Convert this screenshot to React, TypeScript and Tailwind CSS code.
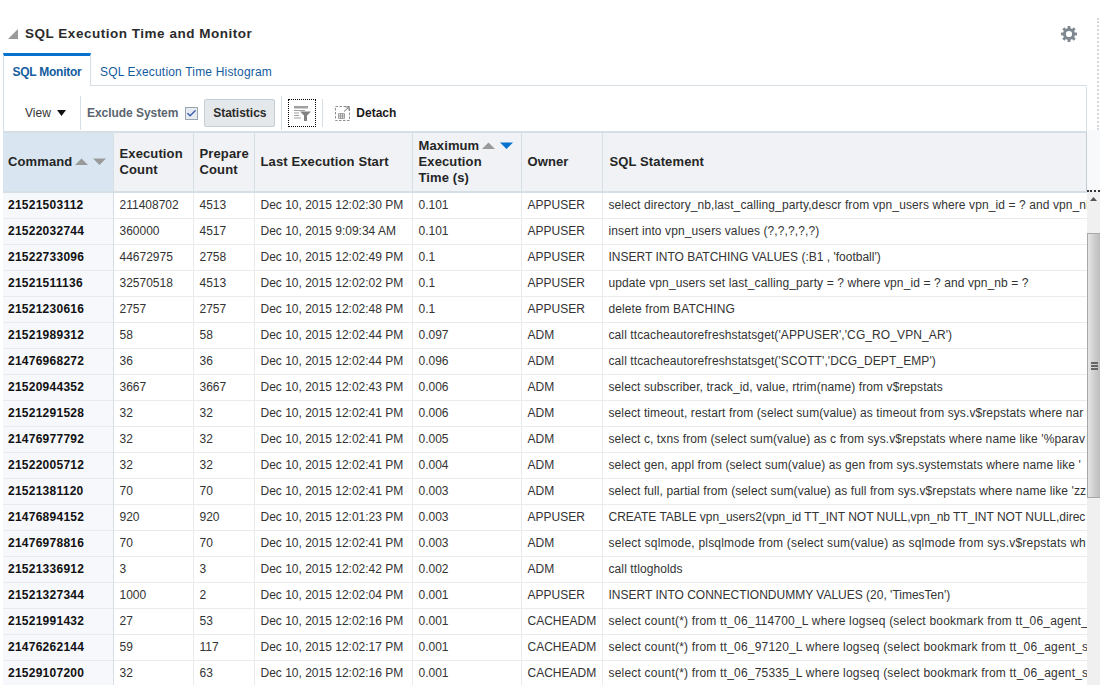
import { Check } from "lucide-react";

const rows = [
  ["21521503112", "211408702", "4513", "Dec 10, 2015 12:02:30 PM", "0.101", "APPUSER", "select directory_nb,last_calling_party,descr from vpn_users where vpn_id = ? and vpn_nb = ?"],
  ["21522032744", "360000", "4517", "Dec 10, 2015 9:09:34 AM", "0.101", "APPUSER", "insert into vpn_users values (?,?,?,?,?)"],
  ["21522733096", "44672975", "2758", "Dec 10, 2015 12:02:49 PM", "0.1", "APPUSER", "INSERT INTO BATCHING VALUES (:B1 , 'football')"],
  ["21521511136", "32570518", "4513", "Dec 10, 2015 12:02:02 PM", "0.1", "APPUSER", "update vpn_users set last_calling_party = ? where vpn_id = ? and vpn_nb = ?"],
  ["21521230616", "2757", "2757", "Dec 10, 2015 12:02:48 PM", "0.1", "APPUSER", "delete from BATCHING"],
  ["21521989312", "58", "58", "Dec 10, 2015 12:02:44 PM", "0.097", "ADM", "call ttcacheautorefreshstatsget('APPUSER','CG_RO_VPN_AR')"],
  ["21476968272", "36", "36", "Dec 10, 2015 12:02:44 PM", "0.096", "ADM", "call ttcacheautorefreshstatsget('SCOTT','DCG_DEPT_EMP')"],
  ["21520944352", "3667", "3667", "Dec 10, 2015 12:02:43 PM", "0.006", "ADM", "select subscriber, track_id, value, rtrim(name) from v$repstats"],
  ["21521291528", "32", "32", "Dec 10, 2015 12:02:41 PM", "0.006", "ADM", "select timeout, restart from (select sum(value) as timeout from sys.v$repstats where nar"],
  ["21476977792", "32", "32", "Dec 10, 2015 12:02:41 PM", "0.005", "ADM", "select c, txns from (select sum(value) as c from sys.v$repstats where name like '%parav"],
  ["21522005712", "32", "32", "Dec 10, 2015 12:02:41 PM", "0.004", "ADM", "select gen, appl from (select sum(value) as gen from sys.systemstats where name like '"],
  ["21521381120", "70", "70", "Dec 10, 2015 12:02:41 PM", "0.003", "ADM", "select full, partial from (select sum(value) as full from sys.v$repstats where name like 'zz"],
  ["21476894152", "920", "920", "Dec 10, 2015 12:01:23 PM", "0.003", "APPUSER", "CREATE TABLE vpn_users2(vpn_id TT_INT NOT NULL,vpn_nb TT_INT NOT NULL,direc"],
  ["21476978816", "70", "70", "Dec 10, 2015 12:02:41 PM", "0.003", "ADM", "select sqlmode, plsqlmode from (select sum(value) as sqlmode from sys.v$repstats wh"],
  ["21521336912", "3", "3", "Dec 10, 2015 12:02:42 PM", "0.002", "ADM", "call ttlogholds"],
  ["21521327344", "1000", "2", "Dec 10, 2015 12:02:04 PM", "0.001", "APPUSER", "INSERT INTO CONNECTIONDUMMY VALUES (20, 'TimesTen')"],
  ["21521991432", "27", "53", "Dec 10, 2015 12:02:16 PM", "0.001", "CACHEADM", "select count(*) from tt_06_114700_L where logseq (select bookmark from tt_06_agent_"],
  ["21476262144", "59", "117", "Dec 10, 2015 12:02:17 PM", "0.001", "CACHEADM", "select count(*) from tt_06_97120_L where logseq (select bookmark from tt_06_agent_s"],
  ["21529107200", "32", "63", "Dec 10, 2015 12:02:16 PM", "0.001", "CACHEADM", "select count(*) from tt_06_75335_L where logseq (select bookmark from tt_06_agent_s"],
];

// the reference's hinted text runs a little wider on lowercase-heavy rows
function sqlCell(sql: string) {
  if (sql.startsWith("INSERT") || sql.startsWith("CREATE")) {
    return "overflow-hidden pl-[6px] whitespace-nowrap";
  }
  if (sql.startsWith("select count") || sql.startsWith("select sqlmode")) {
    return "overflow-hidden pl-[6px] tracking-[0.2px] whitespace-nowrap";
  }
  return "overflow-hidden pl-[6px] tracking-[0.1px] whitespace-nowrap";
}

function SortArrows({ active }: { active?: boolean }) {
  return (
    <svg width="34" height="10" viewBox="0 0 34 10" className="shrink-0">
      <path d="M1 8 L7.5 1.5 L14 8 Z" fill="#9a9a9a" />
      <path d="M19 1.5 H32 L25.5 8 Z" fill={active ? "#0572ce" : "#9a9a9a"} />
    </svg>
  );
}

function Gear() {
  return (
    <svg width="16" height="16" viewBox="0 0 16 16">
      <circle cx="8" cy="8" r="4.6" fill="none" stroke="#7f8890" strokeWidth="3" />
      <g stroke="#7f8890" strokeWidth="2.8">
        <path d="M8 0 V3" />
        <path d="M8 13 V16" />
        <path d="M0 8 H3" />
        <path d="M13 8 H16" />
        <path d="M2.3 2.3 L4.4 4.4" />
        <path d="M11.6 11.6 L13.7 13.7" />
        <path d="M13.7 2.3 L11.6 4.4" />
        <path d="M4.4 11.6 L2.3 13.7" />
      </g>
    </svg>
  );
}

function QbeIcon() {
  return (
    <svg width="17" height="15" viewBox="0 0 17 15">
      <path d="M0 0 H14 V2.5 H0 Z" fill="#a0a0a0" />
      <path d="M0 4.5 H11 M0 7 H5 M0 9.5 H5 M0 12 H7" stroke="#a0a0a0" strokeWidth="1.2" />
      <path d="M6 5.5 H17 L13 9.5 V15 H10 V9.5 Z" fill="#808080" />
    </svg>
  );
}

function DetachIcon() {
  return (
    <svg width="16" height="16" viewBox="0 0 16 16">
      <rect x="0.5" y="1.5" width="14" height="14" fill="none" stroke="#8f8f8f" strokeDasharray="2.5 1.5" />
      <path d="M9 6.5 L13.5 2.5 M10.5 2 H14 V5.5" fill="none" stroke="#777" />
      <path d="M3.5 8.5 H9.5 V13.5 H3.5 Z M3.5 10.2 H9.5 M3.5 11.9 H9.5 M5.5 8.5 V13.5 M7.5 8.5 V13.5" fill="none" stroke="#8f8f8f" strokeWidth="0.8" />
    </svg>
  );
}

export default function App() {
  return (
    <div className="relative h-[685px] w-[1100px] overflow-hidden bg-white font-['Liberation_Sans',Arial,sans-serif] text-xs text-[#333]">
      {/* Panel header */}
      <div className="flex h-[53px] items-start pt-[26px]">
        <svg width="12" height="12" viewBox="0 0 12 12" className="mt-[2px] ml-[7px]">
          <path d="M11 1 V11 H1 Z" fill="#9a9a9a" />
        </svg>
        <h1 className="ml-[6px] text-[13.5px] leading-4 font-bold tracking-[0.52px] text-[#2b2b2b]">
          SQL Execution Time and Monitor
        </h1>
        <div className="mr-[23px] ml-auto">
          <Gear />
        </div>
      </div>
      <div className="absolute top-[18px] right-[1px] h-[112px] border-r-2 border-dotted border-[#d5d9dd]" />

      {/* Tabs */}
      <div className="ml-[3px] flex h-[33px] w-[1084px]">
        <div className="h-[33px] w-[88px] border-t-[3px] border-r border-l border-t-[#0572ce] border-r-[#d6dfe6] border-l-[#d6dfe6] bg-white pt-[8px] text-center font-bold tracking-[-0.25px] text-[#145c9e]">
          SQL Monitor
        </div>
        <div className="flex-1 border-b border-[#d6dfe6] pt-[11px] pl-[9px] tracking-[0.18px] text-[#145c9e]">
          SQL Execution Time Histogram
        </div>
      </div>

      {/* Toolbar */}
      <div className="ml-[3px] flex h-[45px] w-[1084px] items-center rounded-tr-[3px] border-r border-l border-[#d6dfe6] pt-[9px] text-xs">
        <div className="flex h-[34px] w-[77px] items-center gap-[6px] border-r border-[#d6dfe6] pl-[21px] text-[#333]">
          View
          <svg width="9" height="6" viewBox="0 0 9 6">
            <path d="M0 0 H9 L4.5 6 Z" fill="#111" />
          </svg>
        </div>
        <span className="ml-[6px] font-bold tracking-[-0.05px] text-[#5a6570]">Exclude System</span>
        <span className="ml-[7px] flex h-[13px] w-[13px] items-center justify-center border border-[#9aa5ae] bg-[#e6ebf2]">
          <Check size={11} strokeWidth={3} className="text-[#3a5fa8]" />
        </span>
        <button className="ml-[6px] h-[28px] w-[71px] rounded-[2px] border border-[#c4ced7] bg-[#e4e8ea] font-bold text-[#2b2b2b]">
          Statistics
        </button>
        <div className="ml-[6px] h-[34px] border-r border-[#d6dfe6]" />
        <div className="ml-[6px] flex h-[28px] w-[28px] items-center justify-center border border-dotted border-black">
          <QbeIcon />
        </div>
        <div className="ml-[6px] h-[28px] border-r border-[#d6dfe6]" />
        <div className="ml-[12px]">
          <DetachIcon />
        </div>
        <span className="ml-[5px] font-bold text-[#1a1a1a]">Detach</span>
      </div>

      {/* Table */}
      <div className="ml-[3px] h-[554px] w-[1084px] overflow-hidden">
        <table className="w-[1084px] table-fixed border-collapse">
          <colgroup>
            <col className="w-[110px]" />
            <col className="w-[80px]" />
            <col className="w-[61px]" />
            <col className="w-[158px]" />
            <col className="w-[109px]" />
            <col className="w-[81px]" />
            <col />
          </colgroup>
          <thead>
            <tr className="h-[60px] border-t-2 border-b-2 border-[#d6dfe6] bg-[#f0f2f5] text-left text-[13px] leading-4 font-bold tracking-[0.12px] text-[#252525]">
              <th className="border-r border-[#d6dfe6] bg-[#d9e6f2] pl-[5px]">
                <div className="flex items-center gap-[2px]">
                  Command
                  <SortArrows />
                </div>
              </th>
              <th className="border-r border-[#d6dfe6] pl-[6px]">
                Execution
                <br />
                Count
              </th>
              <th className="border-r border-[#d6dfe6] pl-[6px]">
                Prepare
                <br />
                Count
              </th>
              <th className="border-r border-[#d6dfe6] pl-[6px]">Last Execution Start</th>
              <th className="border-r border-[#d6dfe6] pl-[6px]">
                <div className="flex items-center gap-[2px]">
                  Maximum
                  <SortArrows active />
                </div>
                Execution
                <br />
                Time (s)
              </th>
              <th className="border-r border-[#d6dfe6] pl-[6px]">Owner</th>
              <th className="border-r border-[#c4ccd3] pl-[7px]">SQL Statement</th>
            </tr>
          </thead>
          <tbody>
            {rows.map((row) => (
              <tr key={row[0]} className="h-[26px] border-b border-[#e9ebee]">
                <td className="border-r border-[#d6dfe6] bg-[#f6f8fc] pl-[5px] font-bold tracking-[0.25px] whitespace-nowrap text-[#111]">{row[0]}</td>
                <td className="border-r border-[#e9ebee] pl-[6px]">{row[1]}</td>
                <td className="border-r border-[#e9ebee] pl-[6px]">{row[2]}</td>
                <td className="border-r border-[#e9ebee] pl-[6px] whitespace-nowrap">{row[3]}</td>
                <td className="border-r border-[#e9ebee] pl-[6px]">{row[4]}</td>
                <td className="border-r border-[#e9ebee] pl-[6px]">{row[5]}</td>
                <td className={sqlCell(row[6])}>{row[6]}</td>
              </tr>
            ))}
          </tbody>
        </table>
      </div>

      {/* Scrollbar */}
      <div className="absolute top-[130px] right-0 h-[60px] w-[13px] bg-[#f8f9fb]" />
      <div className="absolute top-[190px] right-0 flex h-[495px] w-[13px] flex-col border-t-2 border-dotted border-[#333] bg-[#f0f0f0]">
        <div className="flex h-[41px] justify-center pt-[5px]">
          <svg width="7" height="4" viewBox="0 0 7 4">
            <path d="M0 4 L3.5 0 L7 4 Z" fill="#555" />
          </svg>
        </div>
        <div className="flex h-[265px] flex-col items-center justify-center border-t border-b border-l border-[#a8a8a8] bg-gradient-to-r from-[#e6e6e6] via-[#cfcfcf] to-[#bdbdbd]">
          <div className="h-[2px] w-[7px] bg-[#666]" />
          <div className="mt-[1px] h-[2px] w-[7px] bg-[#666]" />
          <div className="mt-[1px] h-[2px] w-[7px] bg-[#666]" />
        </div>
      </div>
    </div>
  );
}
